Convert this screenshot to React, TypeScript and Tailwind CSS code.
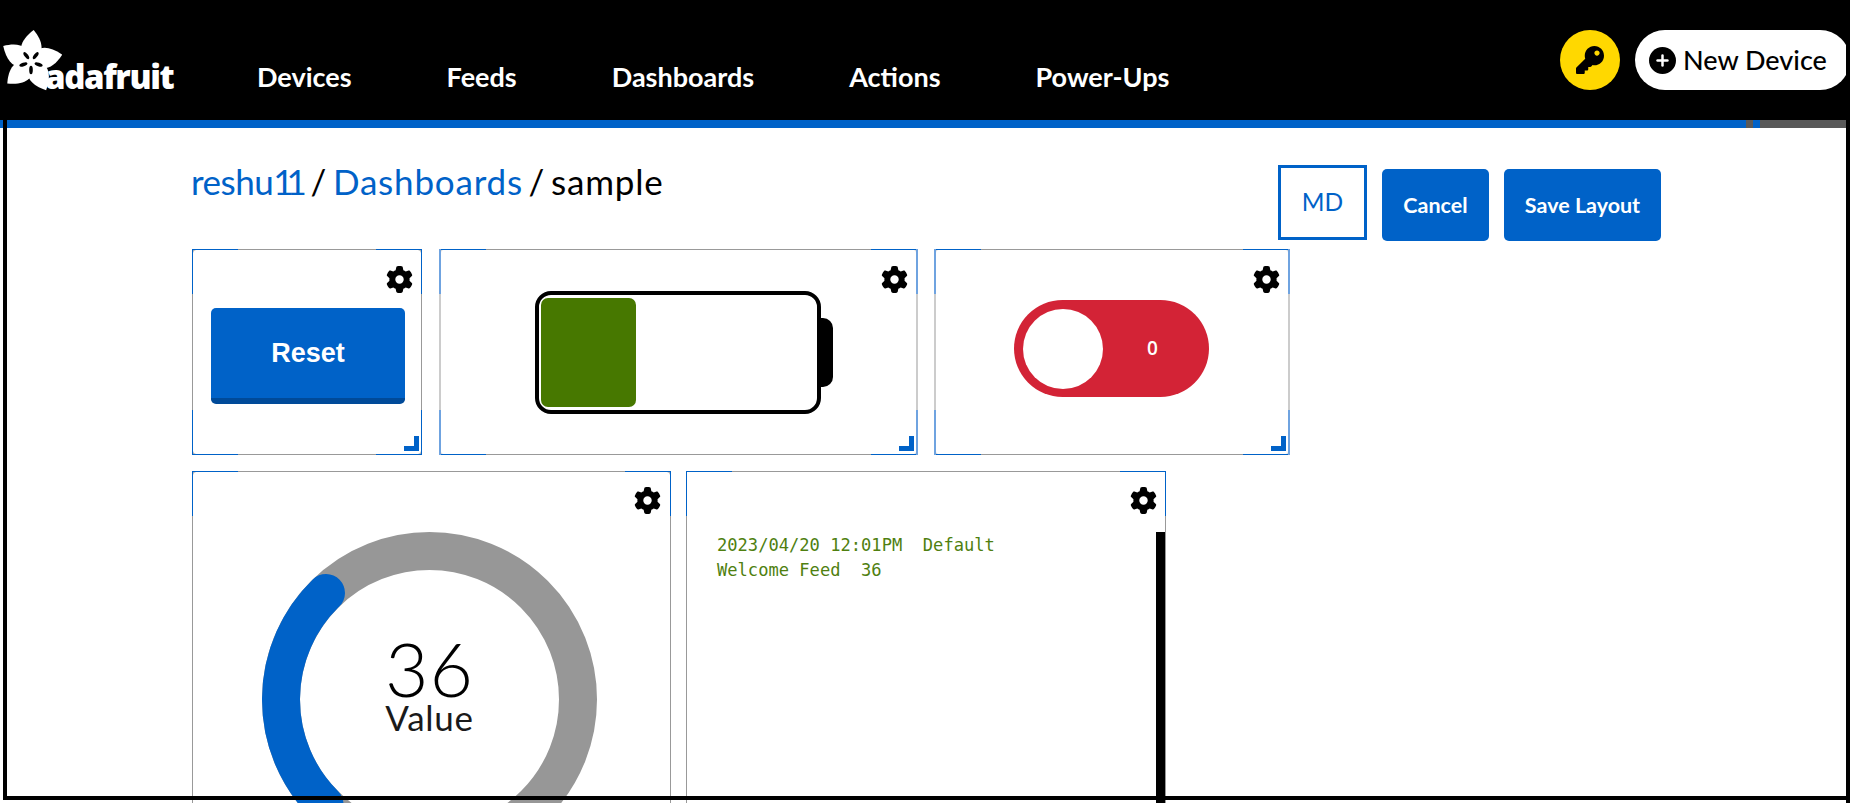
import { FaKey } from 'react-icons/fa';
import { FaGear } from 'react-icons/fa6';
import { Plus } from 'lucide-react';

const BLUE = '#0062c8';

function Flower() {
  return (
    <svg viewBox="0 0 62 62" className="w-[62px] h-[62px] shrink-0 block" fill="white">
      <g transform="translate(31 32)">
        {[3, 75, 150, 226, 298].map((deg) => (
          <path key={deg} transform={`rotate(${deg})`} d="M-2 2 C-15 -9 -13 -20 1 -32 C11 -21 14 -10 2 2 Z" />
        ))}
        <circle r="12" />
        {[36, 108, 180, 252, 324].map((deg) => (
          <ellipse key={deg} transform={`rotate(${deg}) translate(0 -8)`} rx="1.8" ry="4.2" fill="black" />
        ))}
      </g>
    </svg>
  );
}

function Corners({ soft }: { soft?: boolean }) {
  const h = 'absolute w-[46px] h-px bg-[#0062c8]';
  const v = soft
    ? 'absolute w-[2px] h-[45px] bg-[#6fa3e0]'
    : 'absolute w-px h-[45px] bg-[#0062c8]';
  const side = soft ? '-left-[2px]' : '-left-px';
  const sideR = soft ? '-right-[2px]' : '-right-px';
  return (
    <>
      <div className={`${h} -top-px -left-px`} />
      <div className={`${h} -top-px -right-px`} />
      <div className={`${h} -bottom-px -left-px`} />
      <div className={`${h} -bottom-px -right-px`} />
      <div className={`${v} -top-px ${side}`} />
      <div className={`${v} -top-px ${sideR}`} />
      <div className={`${v} -bottom-px ${side}`} />
      <div className={`${v} -bottom-px ${sideR}`} />
    </>
  );
}

function Gear({ className = 'top-[16px] right-[8px]' }: { className?: string }) {
  return <FaGear className={`absolute text-black ${className}`} size={27} />;
}

function Handle() {
  return <div className="absolute right-[2px] bottom-[3px] w-[15px] h-[15px] border-r-[5px] border-b-[5px] border-[#0062c8]" />;
}

export default function App() {
  return (
    <div className="h-screen overflow-hidden bg-black relative font-['Lato',sans-serif]">
      <div className="w-[1846px] h-full overflow-hidden bg-white">
        <header className="h-[120px] bg-black flex items-center">
          <div className="flex items-end w-[174px] shrink-0 mt-[2px]">
            <Flower />
            <span className="-ml-[17px] text-white text-[33px] leading-[40px] font-extrabold font-['Open_Sans',sans-serif] tracking-[-1.4px] -mb-[5px]">adafruit</span>
          </div>
          <nav className="flex ml-[35.5px] mt-[34px] text-white text-[27px] font-bold">
            {['Devices', 'Feeds', 'Dashboards', 'Actions', 'Power-Ups'].map((item) => (
              <a key={item} className="px-[47.5px]">{item}</a>
            ))}
          </nav>
          <div className="ml-auto flex items-center gap-[15px] -mr-[4px]">
            <div className="w-[60px] h-[60px] rounded-full bg-[#ffd800] flex items-center justify-center">
              <FaKey size={28} className="text-black" />
            </div>
            <div className="w-[215px] h-[60px] rounded-full bg-white flex items-center pl-[14px] gap-[7px]">
              <span className="w-[27px] h-[27px] rounded-full bg-black flex items-center justify-center">
                <Plus size={17} strokeWidth={3.5} className="text-white" />
              </span>
              <span className="text-[27px] text-black font-medium whitespace-nowrap">New Device</span>
            </div>
          </div>
        </header>

        <div className="h-[8px] flex">
          <div className="w-[1746px] bg-[#0062c8]" />
          <div className="w-[7px] bg-[#595959]" />
          <div className="w-[7px] bg-[#0062c8]" />
          <div className="flex-1 bg-[#595959]" />
        </div>

        <main className="pl-[192px] pr-[185px]">
          <div className="h-[121px] flex justify-between items-start">
            <h1 className="pt-[31px] -ml-px text-[35px] leading-[44px] text-black [word-spacing:-4px]">
              <a className="text-[#0062c8] tracking-[-0.5px]">reshu<span className="tracking-[-7px]">11</span></a><span className="ml-[5px] tracking-[0.8px]"> / </span><a className="text-[#0062c8] tracking-[0.8px]">Dashboards</a><span className="tracking-[0.8px]"> / sample</span>
            </h1>
            <div className="flex items-start mt-[37px]">
              <div className="w-[89px] h-[75px] border-[3px] border-[#0062c8] flex items-center justify-center text-[24.5px] text-[#0062c8]">MD</div>
              <button className="w-[107px] h-[72px] ml-[15px] mt-[4px] rounded-[5px] bg-[#0062c8] text-white text-[21.5px] font-bold">Cancel</button>
              <button className="w-[157px] h-[72px] ml-[15px] mt-[4px] rounded-[5px] bg-[#0062c8] text-white text-[21.5px] font-bold">Save Layout</button>
            </div>
          </div>

          <div className="flex">
            <div className="relative w-[230px] h-[206px] rounded-[4px] border border-[#999] pl-[18px] pt-[58px]">
              <Corners />
              <Gear />
              <button className="w-[194px] h-[96px] rounded-[5px] bg-[#0062c8] border-b-[6px] border-[#004a99] text-white text-[27px] font-bold font-['Liberation_Sans',sans-serif]">Reset</button>
              <Handle />
            </div>

            <div className="relative ml-[17px] w-[479px] h-[206px] rounded-[4px] border-y border-y-[#999] border-x-2 border-x-[#ccc] pl-[94px] pt-[41px] flex items-center">
              <Corners soft />
              <Gear />
              <div className="flex items-center self-start">
                <div className="w-[286px] h-[123px] rounded-[16px] border-4 border-black px-[2px] py-[3px]">
                  <div className="w-[95px] h-full rounded-[7px] bg-[#477800]" />
                </div>
                <div className="w-[12px] h-[69px] rounded-r-[10px] bg-black" />
              </div>
              <Handle />
            </div>

            <div className="relative ml-[16px] w-[356px] h-[206px] rounded-[4px] border-y border-y-[#999] border-x-2 border-x-[#ccc] pl-[78px] pt-[50px]">
              <Corners soft />
              <Gear />
              <div className="w-[195px] h-[97px] rounded-full bg-[#d32336] flex items-center pl-[9px]">
                <div className="w-[80px] h-[80px] rounded-full bg-white" />
                <span className="ml-[44px] text-white text-[19px] font-semibold font-['Open_Sans',sans-serif]">0</span>
              </div>
              <Handle />
            </div>
          </div>

          <div className="flex mt-[16px]">
            <div className="relative w-[479px] h-[460px] rounded-[4px] border border-[#999] pl-[69px] pt-[60px]">
              <Corners />
              <Gear className="top-[15px] right-[9px]" />
              <div className="relative w-[335px] h-[335px]">
                <svg viewBox="0 0 335 335" className="w-[335px] h-[335px] block" fill="none" strokeWidth="38">
                  <circle cx="167.5" cy="167.5" r="148.5" stroke="#979797" />
                  <path d="M 62.5 272.5 A 148.5 148.5 0 0 1 64 61" stroke={BLUE} strokeLinecap="round" />
                </svg>
                <div className="absolute inset-0 flex flex-col items-center text-black">
                  <span className="mt-[103px] text-[75px] leading-[66px] tracking-[1px] font-light">36</span>
                  <span className="text-[35px] leading-[32px] tracking-[0.7px] text-[#1a1a1a]">Value</span>
                </div>
              </div>
            </div>

            <div className="relative ml-[15px] w-[480px] h-[460px] border border-[#999] pl-[30px] pt-[61px]">
              <Corners />
              <Gear className="top-[15px] right-[8px]" />
              <pre className="font-['DejaVu_Sans_Mono',monospace] text-[17.1px] leading-[25px] text-[#4f7f10]">{'2023/04/20 12:01PM  Default\nWelcome Feed  36'}</pre>
              <div className="absolute right-0 top-[60px] bottom-0 w-[9px] bg-black" />
            </div>
          </div>
        </main>
      </div>

      {/* black outline sitting over the page */}
      <div className="absolute left-[3px] top-[120px] w-[1843px] h-[680px] border-l-4 border-b-4 border-black pointer-events-none" />
    </div>
  );
}
